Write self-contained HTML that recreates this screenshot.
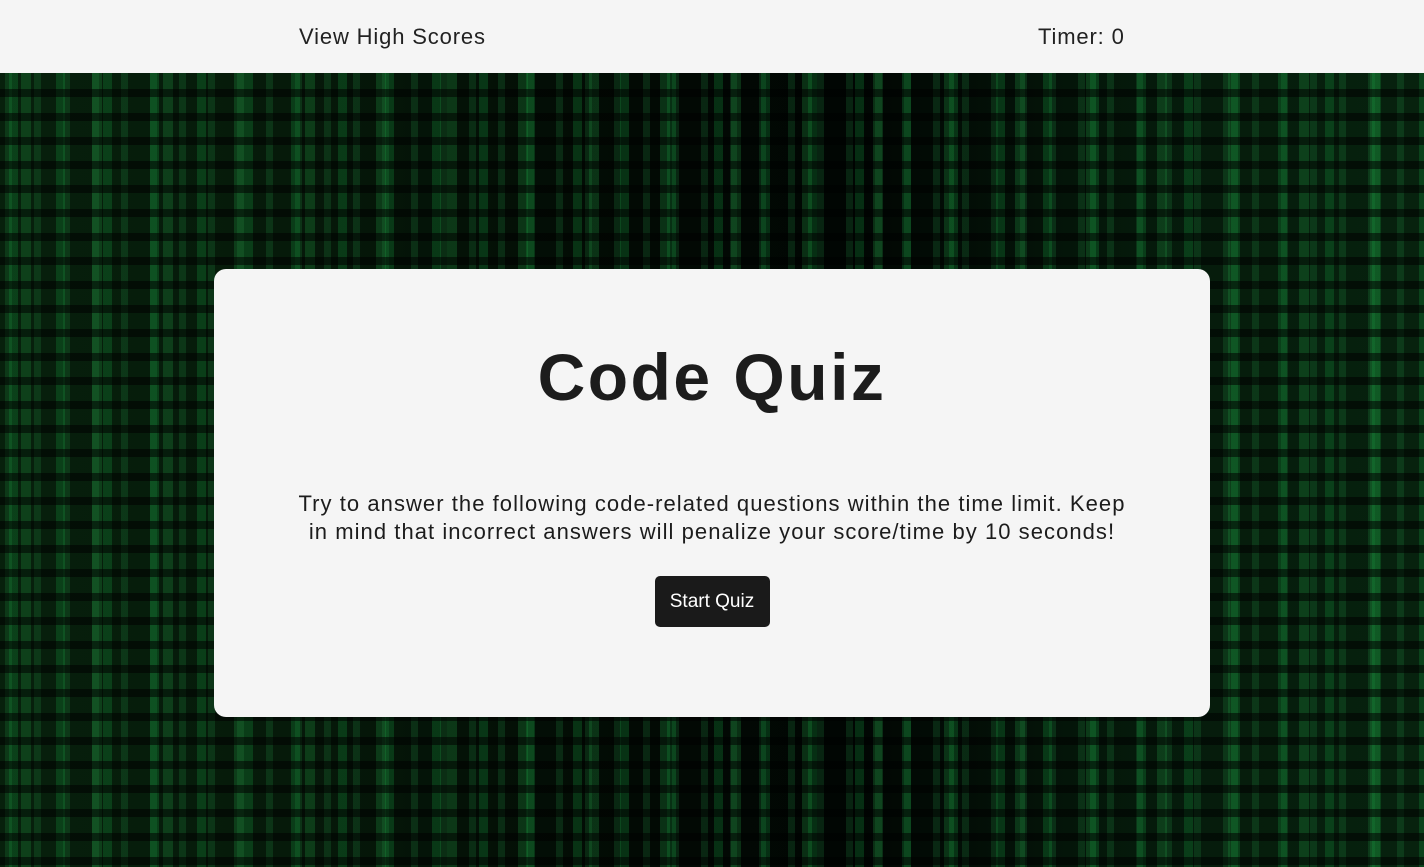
<!DOCTYPE html>
<html><head><meta charset="utf-8"><style>
*{margin:0;padding:0;box-sizing:border-box}
html,body{width:1424px;height:867px;overflow:hidden;font-family:"Liberation Sans",sans-serif}
body{background:#010401;position:relative}
.bg{position:absolute;left:0;top:73px;width:1424px;height:794px;
background:
repeating-linear-gradient(180deg,rgba(0,0,0,0) 0 16px,rgba(0,0,0,.55) 16px 24px),
repeating-linear-gradient(90deg,rgba(0,0,0,0) 0 9px,rgba(20,150,60,.28) 9px 18px,rgba(0,0,0,0) 18px 47px),
repeating-linear-gradient(90deg,rgba(0,0,0,0) 0 21px,rgba(30,140,60,.3) 21px 31px,rgba(0,0,0,0) 31px 71px),
repeating-linear-gradient(90deg,rgba(0,0,0,0) 0 5px,rgba(40,170,80,.18) 5px 12px,rgba(0,0,0,0) 12px 29px),
linear-gradient(90deg,#07200c 0%,#061a0a 20%,#020a04 45%,#010603 60%,#051a0b 80%,#07220e 100%);}
.hdr{position:absolute;left:0;top:0;width:1424px;height:73px;background:#f5f5f5;color:#222;font-size:22px;font-weight:300;letter-spacing:.85px}
.hdr span{position:absolute;top:24px}
.card{position:absolute;left:214px;top:269px;width:996px;height:448px;background:#f5f5f5;border-radius:12px;text-align:center;color:#1c1c1c}
h1{font-size:66px;font-weight:bold;margin-top:70px;line-height:76px;letter-spacing:2.5px}
p{font-size:22px;line-height:28px;width:950px;margin:75px auto 0;letter-spacing:1.05px}
button{margin-top:30px;background:#1a1a1a;color:#fff;border:none;border-radius:5px;width:115px;height:51px;font-size:19px;font-family:inherit}
</style></head><body>
<div class="bg"></div>
<div class="hdr"><span style="left:299px">View High Scores</span><span style="left:1038px">Timer: 0</span></div>
<div class="card">
<h1>Code Quiz</h1>
<p>Try to answer the following code-related questions within the time limit. Keep<br>in mind that incorrect answers will penalize your score/time by 10 seconds!</p>
<button>Start Quiz</button>
</div>
</body></html>
